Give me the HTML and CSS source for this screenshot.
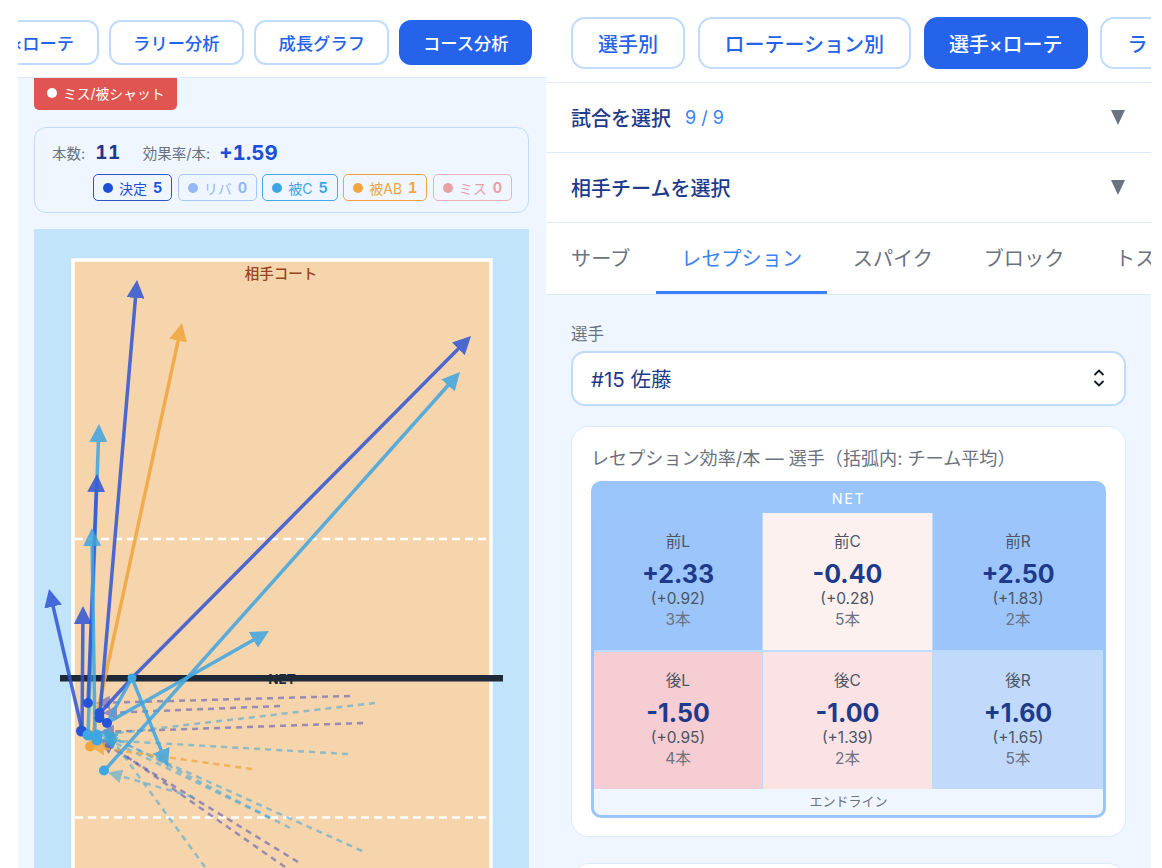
FILE: index.html
```html
<!DOCTYPE html>
<html lang="ja">
<head>
    <meta charset="UTF-8">
    <title>コース分析</title>
    <link rel="stylesheet" href="styles.css">
</head>
<body>
<div class="page">
  <!-- left: course analysis -->
  <section class="left">
    <div class="leftTabs">
      <button class="tab">選手×ローテ</button>
      <button class="tab">ラリー分析</button>
      <button class="tab">成長グラフ</button>
      <button class="tab on">コース分析</button>
    </div>
    <div class="leftBody">
      <div class="missBadge"><span class="whiteDot"></span>ミス/被シャット</div>
      <div class="stats">
        <div class="statLine">
          <span class="statKey">本数:</span><b class="statNum">11</b>
          <span class="statKey gapKey">効果率/本:</span><b class="statRate">+1.59</b>
        </div>
        <div class="chips">
          <span class="chip kill"><i></i>決定<b>5</b></span>
          <span class="chip rebound"><i></i>リバ<b>0</b></span>
          <span class="chip recvC"><i></i>被C<b>5</b></span>
          <span class="chip recvAB"><i></i>被AB<b>1</b></span>
          <span class="chip miss"><i></i>ミス<b>0</b></span>
        </div>
      </div>
      <div class="courtWrap">
        <svg class="court" viewBox="34 229 495 639" width="495" height="639">
          <defs>
            <marker id="hBlue" viewBox="0 0 18 18" markerUnits="userSpaceOnUse" markerWidth="18" markerHeight="18" refX="12" refY="9" orient="auto"><path d="M0 0L18 9L0 18Z" fill="#2f55d4"/></marker>
            <marker id="hSky" viewBox="0 0 18 18" markerUnits="userSpaceOnUse" markerWidth="18" markerHeight="18" refX="12" refY="9" orient="auto"><path d="M0 0L18 9L0 18Z" fill="#3ea6e2"/></marker>
            <marker id="hOrange" viewBox="0 0 18 18" markerUnits="userSpaceOnUse" markerWidth="18" markerHeight="18" refX="12" refY="9" orient="auto"><path d="M0 0L18 9L0 18Z" fill="#f0a63c"/></marker>
            <marker id="dBlue" viewBox="0 0 14 14" markerUnits="userSpaceOnUse" markerWidth="14" markerHeight="14" refX="12" refY="7" orient="auto"><path d="M0 0L14 7L0 14Z" fill="#4a50b8"/></marker>
            <marker id="dSky" viewBox="0 0 14 14" markerUnits="userSpaceOnUse" markerWidth="14" markerHeight="14" refX="12" refY="7" orient="auto"><path d="M0 0L14 7L0 14Z" fill="#3ea6d8"/></marker>
            <marker id="dOrange" viewBox="0 0 14 14" markerUnits="userSpaceOnUse" markerWidth="14" markerHeight="14" refX="12" refY="7" orient="auto"><path d="M0 0L14 7L0 14Z" fill="#f0a63c"/></marker>
          </defs>

          <rect class="floor" x="73" y="260" width="418" height="640"/>
          <line class="attack" x1="75" y1="539" x2="490" y2="539"/>
          <line class="attack" x1="75" y1="817.5" x2="490" y2="817.5"/>
          <text class="oppLabel" x="281" y="279">相手コート</text>
          <rect class="net" x="60" y="675" width="443" height="6.5"/>
          <text class="netLabel" x="282" y="684">NET</text>

          <!-- misses -->
          <g class="dash dashBlue">
            <line x1="350" y1="696" x2="98" y2="703" marker-end="url(#dBlue)"/>
            <line x1="280" y1="706" x2="105" y2="713" marker-end="url(#dBlue)"/>
            <line x1="363" y1="723" x2="102" y2="732" marker-end="url(#dBlue)"/>
            <line x1="298" y1="862" x2="102" y2="742" marker-end="url(#dBlue)"/>
            <line x1="285" y1="867" x2="103" y2="740" marker-end="url(#dBlue)"/>
          </g>
          <g class="dash dashSky">
            <line x1="375" y1="703" x2="100" y2="735" marker-end="url(#dSky)"/>
            <line x1="348" y1="754" x2="102" y2="740" marker-end="url(#dSky)"/>
            <line x1="362" y1="851" x2="105" y2="735" marker-end="url(#dSky)"/>
            <line x1="290" y1="828" x2="105" y2="733" marker-end="url(#dSky)"/>
            <line x1="205" y1="867" x2="105" y2="730" marker-end="url(#dSky)"/>
            <line x1="270" y1="818" x2="105" y2="738" marker-end="url(#dSky)"/>
            <line x1="193" y1="797" x2="110" y2="773" marker-end="url(#dSky)"/>
          </g>
          <g class="dash dashOrange">
            <line x1="252" y1="769" x2="93" y2="747" marker-end="url(#dOrange)"/>
          </g>

          <!-- shots -->
          <polyline class="shot sky" points="88,735 98.8,430" marker-end="url(#hSky)"/>
          <polyline class="shot orange" points="90,747 180.7,328.9" marker-end="url(#hOrange)"/>
          <polyline class="shot blue" points="88,703 96.7,480" marker-end="url(#hBlue)"/>
          <polyline class="shot sky" points="95,737 92,534" marker-end="url(#hSky)"/>
          <polyline class="shot blue" points="82,730 83,612" marker-end="url(#hBlue)"/>
          <polyline class="shot blue" points="82,730 50.4,594.8" marker-end="url(#hBlue)"/>
          <polyline class="shot blue" points="100,713 136.5,286" marker-end="url(#hBlue)"/>
          <polyline class="shot blue" points="100,713 132,678 466.8,340.3" marker-end="url(#hBlue)"/>
          <polyline class="shot sky" points="104,771 456,376.5" marker-end="url(#hSky)"/>
          <polyline class="shot sky" points="107,723 263.8,634" marker-end="url(#hSky)"/>
          <polyline class="shot sky" points="107,723 132,678 165.7,761.4" marker-end="url(#hSky)"/>

          <circle class="ptBlue" cx="81.5" cy="731" r="5.5"/>
          <circle class="ptBlue" cx="88" cy="703" r="5"/>
          <circle class="ptBlue" cx="99.5" cy="713" r="5"/>
          <circle class="ptBlue" cx="99.5" cy="718" r="5"/>
          <circle class="ptBlue" cx="107" cy="723" r="5"/>
          <circle class="ptOrange" cx="90" cy="746.5" r="5"/>
          <circle class="ptSky" cx="88" cy="735" r="5.5"/>
          <circle class="ptSky" cx="97" cy="735" r="5.5"/>
          <circle class="ptSky" cx="97" cy="740" r="5.5"/>
          <circle class="ptSky" cx="104" cy="770.5" r="5"/>
          <circle class="ptSky" cx="132" cy="678" r="4.5"/>
        </svg>
      </div>
    </div>
  </section>

  <!-- right: player x rotation -->
  <section class="right">
    <div class="rightTabs">
      <button class="tab big">選手別</button>
      <button class="tab big">ローテーション別</button>
      <button class="tab big on">選手×ローテ</button>
      <button class="tab big">ラリー分析</button>
    </div>
    <div class="picker"><span class="pickerName">試合を選択</span><span class="pickerCount">9 / 9</span><span class="caret"></span></div>
    <div class="picker"><span class="pickerName">相手チームを選択</span><span class="caret"></span></div>
    <div class="skillTabs">
      <span class="skill">サーブ</span>
      <span class="skill on">レセプション</span>
      <span class="skill">スパイク</span>
      <span class="skill">ブロック</span>
      <span class="skill">トス</span>
    </div>
    <div class="rightBody">
      <div class="fieldLabel">選手</div>
      <div class="select">
        <span>#15 佐藤</span>
        <svg width="12" height="20" viewBox="0 0 12 20"><path d="M1.5 7L6 2.5L10.5 7M1.5 13L6 17.5L10.5 13" fill="none" stroke="#111827" stroke-width="1.8"/></svg>
      </div>
      <div class="card">
        <div class="cardTitle">レセプション効率/本 — 選手（括弧内: チーム平均）</div>
        <div class="heat">
          <div class="heatNet">NET</div>
          <div class="cells">
            <div class="cell c1"><span class="pos">前L</span><b>+2.33</b><span class="avg">(+0.92)</span><span class="cnt">3本</span></div>
            <div class="cell c2"><span class="pos">前C</span><b>-0.40</b><span class="avg">(+0.28)</span><span class="cnt">5本</span></div>
            <div class="cell c1"><span class="pos">前R</span><b>+2.50</b><span class="avg">(+1.83)</span><span class="cnt">2本</span></div>
            <div class="cell c3"><span class="pos">後L</span><b>-1.50</b><span class="avg">(+0.95)</span><span class="cnt">4本</span></div>
            <div class="cell c4"><span class="pos">後C</span><b>-1.00</b><span class="avg">(+1.39)</span><span class="cnt">2本</span></div>
            <div class="cell c5"><span class="pos">後R</span><b>+1.60</b><span class="avg">(+1.65)</span><span class="cnt">5本</span></div>
          </div>
          <div class="endLine">エンドライン</div>
        </div>
      </div>
      <div class="card nextCard"></div>
    </div>
  </section>
</div>
</body>
</html>
```

FILE: styles.css
```css
* {
  box-sizing: border-box;
}
html, body {
  margin: 0;
  background: #fff;
}
body {
  font-family: Inter, "Noto Sans CJK JP", sans-serif;
  color: #1e3a8a;
}
.page {
  display: flex;
  height: 868px;
  padding: 0 11px 0 18px;
  overflow: hidden;
}

/* tabs */
.tab {
  flex-shrink: 0;
  height: 45px;
  padding: 0 22.5px;
  border: 2px solid #bfdbfe;
  border-radius: 12px;
  background: #fff;
  color: #2563eb;
  font: 500 17.3px Inter, "Noto Sans CJK JP", sans-serif;
}
.tab.on {
  padding: 0 21.5px;
  background: #2563eb;
  border-color: #2563eb;
  color: #fff;
}
.tab.big {
  height: 52px;
  padding: 0 25px;
  border-radius: 14px;
  font-size: 20px;
}
.tab.big.on {
  padding: 0 23.5px;
}

/* left */
.left {
  flex: none;
  width: 528px;
  display: flex;
  flex-direction: column;
  background: #eff6ff;
}
.leftTabs {
  display: flex;
  justify-content: flex-end;
  gap: 10px;
  flex: none;
  height: 78px;
  padding: 20px 14px 0 0;
  background: #fff;
  border-bottom: 1px solid #dbeafe;
  overflow: hidden;
}
.leftBody {
  padding: 0 17px 0 16px;
}
.missBadge {
  display: flex;
  align-items: center;
  gap: 6px;
  width: 143px;
  height: 32px;
  padding: 0 0 3px 13px;
  border-radius: 0 0 5px 5px;
  background: #e05551;
  color: #fff;
  font-size: 13.8px;
}
.whiteDot {
  width: 10px;
  height: 10px;
  border-radius: 50%;
  background: #fff;
}
.stats {
  height: 86px;
  margin-top: 17px;
  padding: 11px 16px 0 17px;
  border: 1.5px solid #bfdbfe;
  border-radius: 12px;
}
.statLine {
  display: flex;
  align-items: center;
  height: 26px;
}
.statKey {
  color: #6b7280;
  font-size: 14.5px;
}
.gapKey {
  margin-left: 22px;
}
.statNum {
  margin-left: 10px;
  color: #1e3a8a;
  font-size: 19px;
  font-variant-numeric: tabular-nums;
  letter-spacing: 0.5px;
}
.statRate {
  margin-left: 9px;
  color: #1d4ed8;
  font-size: 20.5px;
  font-variant-numeric: tabular-nums;
}
.chips {
  display: flex;
  justify-content: flex-end;
  gap: 5.5px;
  margin-top: 9px;
}
.chip {
  display: flex;
  align-items: center;
  height: 27px;
  padding: 0 8.9px;
  border: 1.5px solid;
  border-radius: 5px;
  font-size: 14px;
}
.chip i {
  width: 10px;
  height: 10px;
  margin-right: 6px;
  border-radius: 50%;
  background: currentColor;
}
.chip b {
  margin-left: 6px;
  font-size: 14.5px;
  font-variant-numeric: tabular-nums;
}
.kill { color: #1d4ed8; border-color: #2f55c8; }
.rebound { color: #93b8f7; border-color: #a8c5f8; }
.recvC { color: #3ea6e2; border-color: #47a8e4; }
.recvAB { color: #f0a63c; border-color: #f0a63c; }
.miss { color: #e8a0a4; border-color: #eeb0b2; }

.courtWrap {
  height: 639px;
  margin-top: 16px;
  background: #c1e4fb;
}
.court {
  display: block;
}
.floor {
  fill: #f6d5ad;
  stroke: #fff;
  stroke-width: 3.5px;
}
.attack {
  stroke: #fff;
  stroke-width: 2.5px;
  stroke-dasharray: 8 5;
}
.oppLabel {
  fill: #96451f;
  font-size: 14.5px;
  font-weight: 500;
  text-anchor: middle;
}
.net {
  fill: #1f2937;
}
.netLabel {
  fill: #1f2937;
  font-size: 13.5px;
  font-weight: 700;
  text-anchor: middle;
}
.dash line {
  stroke-width: 2.5px;
  stroke-dasharray: 6 5;
  opacity: 0.55;
}
.dashBlue line { stroke: #4a50b8; }
.dashSky line { stroke: #3ea6d8; }
.dashOrange line { stroke: #f0a63c; opacity: 0.75; }
.shot {
  fill: none;
  stroke-width: 3.5px;
  opacity: 0.85;
}
.shot.blue { stroke: #2f55d4; }
.shot.sky { stroke: #3ea6e2; }
.shot.orange { stroke: #f0a63c; }
.ptBlue { fill: #2554d8; }
.ptSky { fill: #3ea6e2; }
.ptOrange { fill: #f0a63c; }

/* right */
.right {
  flex: none;
  width: 605px;
  display: flex;
  flex-direction: column;
  background: #fff;
}
.rightTabs {
  display: flex;
  gap: 12.5px;
  flex: none;
  height: 83px;
  padding: 17px 0 0 25px;
  border-bottom: 1px solid #dbeafe;
  overflow: hidden;
}
.picker {
  display: flex;
  align-items: center;
  flex: none;
  height: 70px;
  padding: 0 25px;
  border-bottom: 1px solid #dbeafe;
  font-size: 20px;
  font-weight: 500;
}
.pickerCount {
  margin-left: 14px;
  color: #3b82f6;
  font-size: 18px;
  font-weight: 400;
}
.caret {
  margin-left: auto;
  margin-right: 1px;
  border-left: 7px solid transparent;
  border-right: 7px solid transparent;
  border-top: 15px solid #6b7280;
}
.skillTabs {
  display: flex;
  flex: none;
  height: 72px;
  border-bottom: 1px solid #dbeafe;
  overflow: hidden;
}
.skill {
  flex-shrink: 0;
  padding: 23px 25.3px 0;
  border-bottom: 3px solid transparent;
  color: #6b7280;
  font-size: 20.2px;
  line-height: 26px;
}
.skill:first-child {
  padding-left: 25px;
}
.skill.on {
  color: #3b82f6;
  border-bottom-color: #3b82f6;
}
.rightBody {
  flex: 1;
  padding: 29px 25px 0;
  background: #eff6ff;
}
.fieldLabel {
  height: 20px;
  margin-bottom: 7px;
  color: #6b7280;
  font-size: 16.5px;
  line-height: 20px;
}
.select {
  display: flex;
  align-items: center;
  justify-content: space-between;
  height: 55px;
  padding: 0 19px 1px 18px;
  border: 2px solid #bfdbfe;
  border-radius: 14px;
  background: #fff;
  font-size: 20.5px;
}
.card {
  height: 411px;
  margin-top: 20px;
  padding: 19px;
  border: 1.5px solid #dbeafe;
  border-radius: 18px;
  background: #fff;
}
.nextCard {
  margin-top: 26px;
}
.cardTitle {
  height: 22px;
  margin-bottom: 13px;
  color: #6b7280;
  font-size: 18.1px;
  line-height: 24px;
  white-space: nowrap;
}
.heat {
  height: 337px;
  border: 3px solid #9ac5fb;
  border-radius: 10px;
  background: #9ac5fb;
  overflow: hidden;
}
.heatNet {
  height: 29px;
  color: #fff;
  font-size: 14.5px;
  letter-spacing: 1.5px;
  line-height: 30px;
  text-align: center;
}
.cells {
  display: grid;
  grid-template-columns: 168px 169px 1fr;
  grid-template-rows: 137px 137px;
  gap: 2px 1px;
  background: #bfdbfe;
}
.cell {
  display: flex;
  flex-direction: column;
  align-items: center;
  padding-top: 19px;
  color: #6b7280;
  font-size: 15.5px;
}
.cell .pos {
  height: 20px;
  color: #4b5563;
  line-height: 20px;
}
.cell b {
  height: 32px;
  margin-top: 6px;
  color: #1e3a8a;
  font-size: 25px;
  line-height: 32px;
}
.cell .avg {
  height: 20px;
  margin-top: -1px;
  color: #4b5563;
  line-height: 20px;
}
.cell .cnt {
  height: 20px;
  margin-top: 1px;
  line-height: 20px;
}
.c1 { background: #9bc5fb; }
.c2 { background: #fdf1f0; }
.c3 { background: #f6cdd3; }
.c4 { background: #fbe3e5; }
.c5 { background: #c1d9fb; }
.endLine {
  height: 26px;
  background: #eff6ff;
  color: #6b7280;
  font-size: 13px;
  line-height: 24px;
  text-align: center;
}
```
